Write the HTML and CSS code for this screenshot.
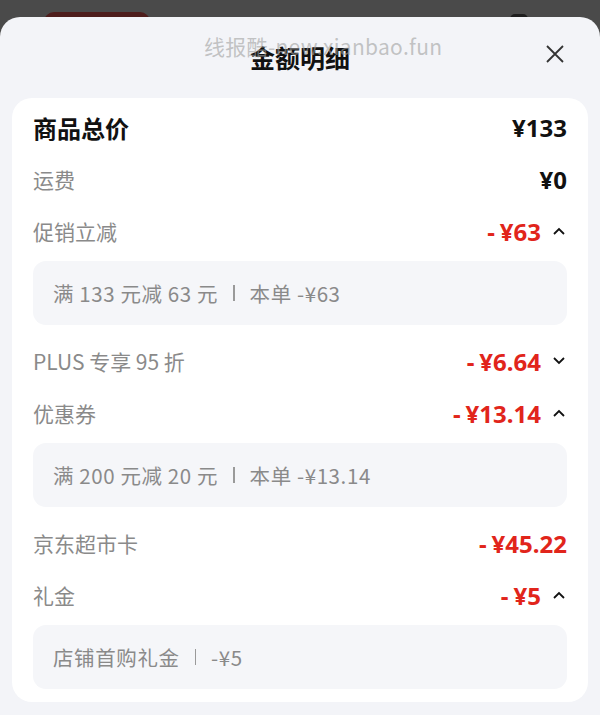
FILE: index.html
```html
<!DOCTYPE html>
<html lang="zh-CN">
<head>
  <meta charset="UTF-8" />
  <meta name="viewport" content="width=device-width, initial-scale=1.0"/>
  <title>金额明细</title>
  <link rel="stylesheet" href="styles.css">
</head>
<body>
  <div class="backdrop">
    <span class="blob red"></span>
    <span class="blob dark"></span>
  </div>

  <div class="sheet">
    <div class="sheet-head">
      <span></span>
      <h2>金额明细</h2>
      <button class="close" aria-label="关闭">
        <svg width="20" height="20" viewBox="0 0 20 20"><path d="M2 2L18 18M18 2L2 18" stroke="#333" stroke-width="1.8" fill="none"/></svg>
      </button>
      <div class="watermark">线报酷-new.xianbao.fun</div>
    </div>

    <div class="card">
      <div class="row total">
        <span class="label">商品总价</span>
        <span class="amount">¥133</span>
      </div>
      <div class="row">
        <span class="label">运费</span>
        <span class="amount">¥0</span>
      </div>

      <div class="row">
        <span class="label">促销立减</span>
        <span class="amount red"><i>-</i>¥63</span>
        <svg class="caret" viewBox="0 0 12 8"><polyline points="1,7 6,2 11,7"/></svg>
      </div>
      <div class="detail">满 133 元减 63 元<span class="sep"></span>本单 -¥63</div>

      <div class="row">
        <span class="label">PLUS 专享 95 折</span>
        <span class="amount red"><i>-</i>¥6.64</span>
        <svg class="caret" viewBox="0 0 12 8"><polyline points="1,1 6,6 11,1"/></svg>
      </div>

      <div class="row">
        <span class="label">优惠券</span>
        <span class="amount red"><i>-</i>¥13.14</span>
        <svg class="caret" viewBox="0 0 12 8"><polyline points="1,7 6,2 11,7"/></svg>
      </div>
      <div class="detail">满 200 元减 20 元<span class="sep"></span>本单 -¥13.14</div>

      <div class="row">
        <span class="label">京东超市卡</span>
        <span class="amount red"><i>-</i>¥45.22</span>
      </div>

      <div class="row">
        <span class="label">礼金</span>
        <span class="amount red"><i>-</i>¥5</span>
        <svg class="caret" viewBox="0 0 12 8"><polyline points="1,7 6,2 11,7"/></svg>
      </div>
      <div class="detail">店铺首购礼金<span class="sep"></span>-¥5</div>
    </div>
  </div>
</body>
</html>
```

FILE: styles.css
```css
body {
  margin: 0;
  width: 600px;
  height: 715px;
  overflow: hidden;
  background: #4a4a4a;
  font-family: "Noto Sans", "Noto Sans CJK SC", sans-serif;
}

.backdrop {
  height: 17px;
  position: relative;
  overflow: hidden;
}

.blob {
  position: absolute;
  border-radius: 10px;
}

.blob.red {
  left: 44px;
  top: 12px;
  width: 106px;
  height: 20px;
  background: #4e1d1c;
}

.blob.dark {
  left: 510px;
  top: 14px;
  width: 18px;
  height: 10px;
  background: #1e1e1e;
}

.sheet {
  background: #f3f4f8;
  border-radius: 20px 20px 0 0;
  height: 698px;
}

.sheet-head {
  height: 81px;
  display: grid;
  grid-template-columns: 1fr auto 1fr;
  align-items: center;
  position: relative;
}

.sheet-head h2 {
  margin: 0;
  font-size: 25px;
  font-weight: 700;
  color: #111;
  font-family: "Noto Sans CJK SC", sans-serif;
  padding-bottom: 2px;
}

.close {
  justify-self: end;
  margin-right: 35px;
  margin-bottom: 8px;
  width: 20px;
  height: 20px;
  padding: 0;
  border: none;
  background: none;
}

.watermark {
  position: absolute;
  left: 204px;
  top: 14px;
  font-size: 21px;
  letter-spacing: 0.3px;
  color: rgba(160, 160, 160, 0.6);
  font-family: "Noto Sans CJK SC", sans-serif;
}

.card {
  margin: 0 12px;
  background: #fff;
  border-radius: 20px;
  padding: 3px 21px 13px;
}

.row {
  height: 52px;
  display: flex;
  align-items: center;
}

.label {
  flex: 1;
  font-size: 21px;
  color: #8a8a8a;
  font-family: "Noto Sans CJK SC", sans-serif;
}

.total .label {
  font-size: 24px;
  font-weight: 700;
  color: #111;
}

.amount {
  font-size: 24px;
  font-weight: 700;
  color: #111;
}

.amount i {
  font-style: normal;
  margin-right: 5px;
}

.amount.red {
  color: #e1251b;
}

.caret {
  width: 12px;
  height: 8px;
  margin-left: 12px;
  margin-right: 2px;
  fill: none;
  stroke: #111;
  stroke-width: 1.8;
}

.detail {
  height: 64px;
  margin: 4px 0 10px;
  padding: 0 20px;
  background: #f5f6f9;
  border-radius: 13px;
  display: flex;
  align-items: center;
  font-size: 20.5px;
  letter-spacing: 0.6px;
  color: #8a8a8a;
  font-family: "Noto Sans CJK SC", sans-serif;
}

.detail:last-child {
  margin-bottom: 0;
}

.sep {
  display: inline-block;
  width: 1.5px;
  height: 16px;
  background: #9a9a9a;
  margin: 0 15px;
}
```
